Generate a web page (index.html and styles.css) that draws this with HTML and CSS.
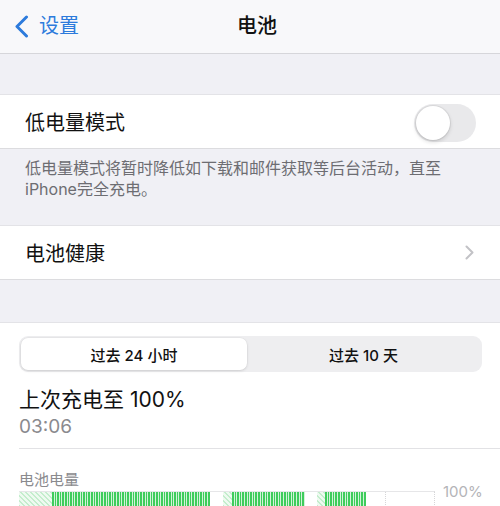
FILE: index.html
```html
<!DOCTYPE html>
<html lang="zh-CN">
<head>
<meta charset="utf-8">
<title>电池</title>
<link rel="stylesheet" href="styles.css">
</head>
<body>
<header class="nav">
  <a class="back">
    <svg class="back-icon" width="15" height="23" viewBox="0 0 15 23"><path d="M12.5 2 L3 11.5 L12.5 21" fill="none" stroke="currentColor" stroke-width="3" stroke-linecap="round" stroke-linejoin="round"/></svg>
    <span>设置</span>
  </a>
  <h1 class="nav-title">电池</h1>
  <span></span>
</header>

<div class="spacer"></div>

<section class="group">
  <div class="row">
    <span class="row-label">低电量模式</span>
    <span class="toggle"><span class="knob"></span></span>
  </div>
</section>
<p class="footnote">低电量模式将暂时降低如下载和邮件获取等后台活动，直至<br>iPhone完全充电。</p>

<section class="group">
  <div class="row">
    <span class="row-label">电池健康</span>
    <svg class="chev" width="9" height="15" viewBox="0 0 9 15"><path d="M1.5 1.5 L7.5 7.5 L1.5 13.5" fill="none" stroke="currentColor" stroke-width="2" stroke-linecap="round" stroke-linejoin="round"/></svg>
  </div>
</section>

<div class="spacer2"></div>

<section class="card">
  <div class="segmented">
    <div class="seg seg-active">过去 24 小时</div>
    <div class="seg">过去 10 天</div>
  </div>
  <div class="charge-title">上次充电至 100%</div>
  <div class="charge-time">03:06</div>
  <div class="divider"></div>
  <div class="chart-label">电池电量</div>
  <div class="chart">
    <div class="bars">
      <div class="bar hatch" style="width:33px"></div>
      <div class="bar solid" style="width:158px"></div>
      <div class="bar empty" style="width:13px"></div>
      <div class="bar hatch" style="width:9px"></div>
      <div class="bar solid" style="width:73px"></div>
      <div class="bar empty" style="width:12px"></div>
      <div class="bar hatch" style="width:8px"></div>
      <div class="bar solid" style="width:41px"></div>
      <div class="bar empty grow"></div>
      <div class="gridline" style="left:366px"></div>
      <div class="gridline" style="left:415px"></div>
    </div>
    <div class="axis">100%</div>
  </div>
</section>
</body>
</html>
```

FILE: styles.css
```css
* { box-sizing: border-box; }

html, body {
  margin: 0;
  padding: 0;
}

body {
  background: #f0f0f5;
  font-family: "Inter", "Noto Sans CJK SC", sans-serif;
  color: #111;
  overflow: hidden;
}

.nav {
  height: 54px;
  background: #f8f8fa;
  border-bottom: 1px solid #d6d6da;
  display: grid;
  grid-template-columns: 1fr auto 1fr;
  align-items: center;
  padding: 0 0 0 14px;
}

.back {
  display: flex;
  align-items: center;
  gap: 10px;
  color: #2d7bdc;
  font-size: 20px;
  line-height: 24px;
  margin-top: -1px;
}

.back-icon {
  display: block;
}

.nav-title {
  margin: 0;
  font-size: 20px;
  font-weight: 500;
  line-height: 24px;
  color: #111;
  margin-top: -1px;
}

.spacer {
  height: 40px;
}

.spacer2 {
  height: 42px;
}

.group {
  background: #fff;
  border-top: 1px solid #e3e3e7;
  border-bottom: 1px solid #dcdcdf;
}

.row {
  height: 53px;
  display: flex;
  align-items: center;
  justify-content: space-between;
  padding: 0 24px 0 25px;
}

.row-label {
  font-size: 20px;
  line-height: 26px;
  color: #111;
  margin-top: 2px;
}

.toggle {
  width: 62px;
  height: 38px;
  border-radius: 19px;
  background: #e9e9eb;
  padding: 2px;
  display: flex;
  align-items: center;
  margin-top: 2px;
}

.knob {
  width: 34px;
  height: 34px;
  border-radius: 50%;
  background: #fff;
  box-shadow: 0 0 0 1px rgba(0,0,0,0.06), 0 2px 4px rgba(0,0,0,0.15);
}

.chev {
  color: #c2c2c6;
  margin-right: 2px;
}

.footnote {
  margin: 0;
  padding: 9px 20px 25px 25px;
  font-family: "Inter", "Noto Sans CJK SC", sans-serif;
  font-size: 16px;
  line-height: 21px;
  color: #6d6d72;
}

.card {
  background: #fff;
  border-top: 1px solid #e3e3e7;
  padding: 13px 0 0 19px;
}

.segmented {
  height: 36px;
  margin-right: 18px;
  border-radius: 9px;
  background: #eeeef0;
  padding: 2px;
  display: flex;
}

.seg {
  flex: 1;
  display: flex;
  align-items: center;
  justify-content: center;
  font-size: 15px;
  font-weight: 500;
  color: #111;
  border-radius: 7px;
}

.seg-active {
  flex: 0 0 226px;
  background: #fff;
  font-weight: 500;
  box-shadow: 0 1px 3px rgba(0,0,0,0.12), 0 0 0 0.5px rgba(0,0,0,0.04);
}

.charge-title {
  margin-top: 14px;
  font-size: 21px;
  line-height: 28px;
  color: #111;
}

.charge-time {
  margin-top: 1px;
  font-size: 19px;
  line-height: 24px;
  color: #8a8a8e;
}

.divider {
  margin-top: 9px;
  height: 1px;
  background: #e2e2e5;
}

.chart-label {
  margin-top: 20px;
  font-family: "Noto Sans CJK SC", sans-serif;
  font-size: 15px;
  line-height: 20px;
  color: #8a8a8e;
}

.chart {
  margin-top: 2px;
  display: flex;
  align-items: flex-start;
  gap: 8px;
}

.bars {
  position: relative;
  width: 416px;
  height: 40px;
  display: flex;
  border-top: 1px solid #e6e6e8;
  border-right: 1px dotted #d6d6d8;
}

.bar {
  height: 100%;
}

.grow {
  flex: 1;
}

.solid {
  background: repeating-linear-gradient(90deg, #3fcc5c 0 1.6px, #d2f3d9 1.6px 2.6px);
}

.hatch {
  background: repeating-linear-gradient(45deg, #c4edcd 0 1.5px, #eefaf0 1.5px 3.5px);
}

.gridline {
  position: absolute;
  top: 0;
  bottom: 0;
  border-left: 1px dotted #d6d6d8;
}

.axis {
  font-size: 15px;
  line-height: 18px;
  color: #b4b4b8;
  margin-top: -8px;
}
```
